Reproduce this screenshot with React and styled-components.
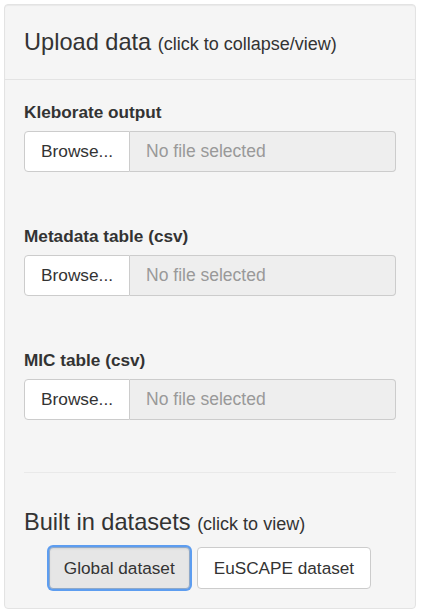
import React from 'react';
import styled, { createGlobalStyle } from 'styled-components';

const GlobalStyle = createGlobalStyle`
  body {
    margin: 0;
    font-family: "Liberation Sans", Arial, sans-serif;
    color: #333;
    background: #fff;
  }
`;

const Page = styled.div`
  padding: 4px 5px 4px 4px;
`;

const Well = styled.div`
  background-color: #f5f5f5;
  border: 1px solid #e3e3e3;
  border-radius: 4px;
  box-shadow: inset 0 1px 1px rgba(0, 0, 0, 0.05);
`;

const Header = styled.div`
  padding: 24px 19px;
  border-bottom: 1px solid #e3e3e3;
  cursor: pointer;
`;

const Title = styled.h3`
  margin: ${({ $top }) => $top || 0} 0 ${({ $bottom }) => $bottom || 0};
  font-size: 23.6px;
  font-weight: 500;
  line-height: 26px;
  height: 26px;
  color: #333;

  small {
    font-size: 18px;
    font-weight: 400;
    line-height: 1;
    color: #333;
  }
`;

const Body = styled.div`
  padding: 20px 19px 19px;
`;

const Group = styled.div`
  margin-bottom: 52px;
`;

const Label = styled.label`
  display: block;
  font-size: 17.2px;
  font-weight: 700;
  line-height: 24px;
  margin-bottom: 7px;
`;

const InputGroup = styled.div`
  display: flex;
  height: 41px;
`;

const BrowseButton = styled.span`
  display: flex;
  align-items: center;
  padding: 0 16px;
  background: #fff;
  border: 1px solid #ccc;
  border-radius: 4px 0 0 4px;
  font-size: 17.3px;
  color: #333;
  cursor: pointer;
`;

const FileName = styled.input`
  flex: 1;
  min-width: 0;
  margin: 0;
  padding: 0 16px;
  background: #eee;
  border: 1px solid #ccc;
  border-left: none;
  border-radius: 0 4px 4px 0;
  font-family: inherit;
  font-size: 17.5px;
  color: #555;
  outline: none;

  &::placeholder {
    color: #999;
  }
`;

const Divider = styled.hr`
  margin: 0;
  border: 0;
  border-top: 1px solid #e9e9e9;
`;

const ButtonRow = styled.div`
  display: flex;
  justify-content: center;
  gap: 7px;
`;

const DataButton = styled.button`
  height: 42px;
  padding: 0 ${({ $active }) => ($active ? '14px' : '16px')};
  font-family: inherit;
  font-size: 17.2px;
  color: #333;
  border-radius: 4px;
  cursor: pointer;
  background: ${({ $active }) => ($active ? '#e6e6e6' : '#fff')};
  border: 1px solid ${({ $active }) => ($active ? '#8fa9c9' : '#ccc')};
  box-shadow: ${({ $active }) =>
    $active ? '0 0 0 2px #5d9df0, inset 0 1px 2px rgba(0,0,0,0.08)' : 'none'};
`;

const FileField = ({ label }) => (
  <Group>
    <Label>{label}</Label>
    <InputGroup>
      <BrowseButton>Browse...</BrowseButton>
      <FileName type="text" readOnly placeholder="No file selected" />
    </InputGroup>
  </Group>
);

export default function App() {
  return (
    <Page>
      <GlobalStyle />
      <Well>
        <Header>
          <Title>
            Upload data <small>(click to collapse/view)</small>
          </Title>
        </Header>
        <Body>
          <FileField label="Kleborate output" />
          <FileField label="Metadata table (csv)" />
          <FileField label="MIC table (csv)" />
          <Divider />
          <Title $top="36px" $bottom="12px">
            Built in datasets <small>(click to view)</small>
          </Title>
          <ButtonRow>
            <DataButton $active>Global dataset</DataButton>
            <DataButton>EuSCAPE dataset</DataButton>
          </ButtonRow>
        </Body>
      </Well>
    </Page>
  );
}
